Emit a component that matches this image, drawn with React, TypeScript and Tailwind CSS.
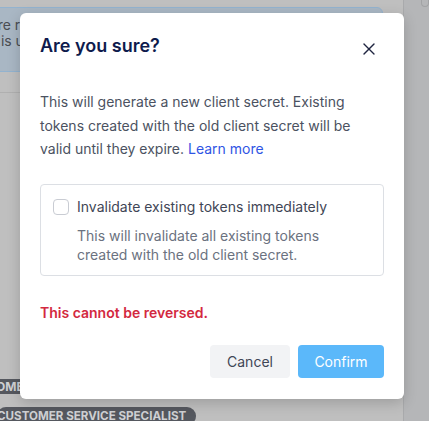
import { X } from "lucide-react";

function BackdropPage() {
  return (
    <div className="flex h-full w-full bg-[#bfbfbf]">
      <div className="flex min-w-0 flex-1 flex-col border-r border-[#a9aaac]">
        <div className="mt-[7px] mr-[20px] -ml-[69px] h-[65px] rounded-md border border-[#93b3cf] bg-[#a9b7c4] px-[10px] py-[9px] text-[14px] leading-4 text-[#4a4d52]">
          <p>Make sure required</p>
          <p className="pl-[10px]">So this is used</p>
        </div>
        <div className="mt-[20px] border-t border-[#b0b0b0]" />
        <div className="mt-auto flex flex-col items-start gap-[13px]">
          <span className="-ml-[47px] rounded-full bg-[#55585f] px-[8px] text-[12px] font-bold leading-[15px] text-[#cfd0d3]">
            WELCOME
          </span>
          <span className="-ml-[3px] -mb-[4px] rounded-full bg-[#55585f] pr-[10px] pt-[1px] text-[11.6px] font-bold leading-[17px] text-[#cfd0d3]">
            CUSTOMER SERVICE SPECIALIST
          </span>
        </div>
      </div>
      <div className="w-[25px] shrink-0 bg-[#b5b6b8] pl-[17px]">
        <div className="h-[7px] rounded-b-md border border-t-0 border-[#a2a3a5]" />
      </div>
    </div>
  );
}

export default function App() {
  return (
    <div
      className="relative h-[421px] w-[429px] overflow-hidden"
      style={{ fontFamily: "Inter, 'Noto Sans', sans-serif" }}
    >
      <BackdropPage />
      <div className="absolute left-[20px] top-[13px] w-[384px] rounded-md bg-white px-[20px] pt-[20px] pb-[21px] shadow-[0_4px_14px_rgba(0,0,0,0.18)]">
        <div className="flex items-center justify-between">
          <h2 className="text-[18px] font-semibold leading-6 text-[#0e1b4d]">Are you sure?</h2>
          <button className="mr-[5px] mt-[6px] text-[#1f2540]">
            <X size={20} strokeWidth={1.6} />
          </button>
        </div>
        <p className="mt-[31px] text-[14px] leading-[23.5px] text-[#4b5261]">
          This will generate a new client secret. Existing tokens created with the old client secret will be
          valid until they expire. <a className="text-[#2f55e4]">Learn more</a>
        </p>
        <div className="mt-[23px] rounded border border-[#dcdfe4] px-[12px] pt-[12px] pb-[10px]">
          <label className="flex items-center gap-[8px] text-[14px] leading-5 text-[#3f4656]">
            <span className="h-[16px] w-[16px] shrink-0 rounded border border-[#c9ccd3] bg-white" />
            Invalidate existing tokens immediately
          </label>
          <p className="mt-[9px] pl-[24px] text-[14px] leading-[19.5px] text-[#6b7280]">
            This will invalidate all existing tokens
            <br />
            created with the old client secret.
          </p>
        </div>
        <p className="mt-[27px] text-[14px] font-semibold leading-5 text-[#d3293f]">This cannot be reversed.</p>
        <div className="mt-[22px] flex justify-end gap-[8px]">
          <button className="h-[33px] w-[80px] rounded bg-[#f2f3f5] text-[14px] text-[#3f4656]">Cancel</button>
          <button className="h-[33px] w-[86px] rounded bg-[#5bb8fa] text-[14px] text-white">Confirm</button>
        </div>
      </div>
    </div>
  );
}
